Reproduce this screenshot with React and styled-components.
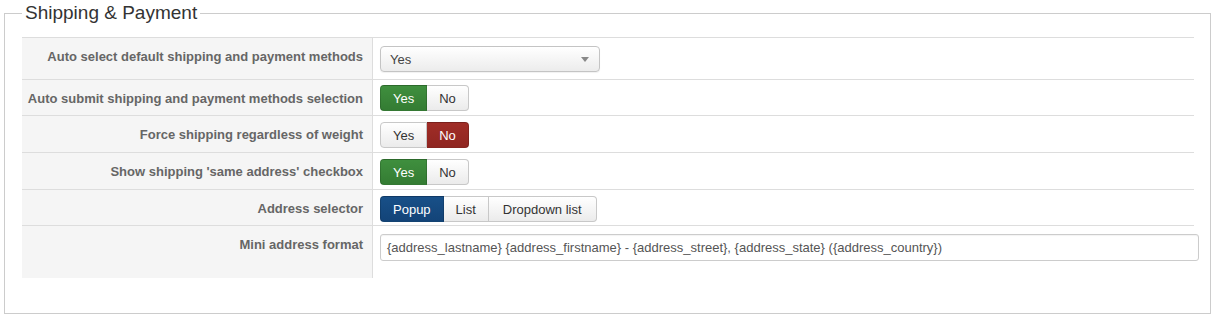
import styled, { createGlobalStyle } from "styled-components";

const GlobalStyle = createGlobalStyle`
  html, body {
    margin: 0;
    padding: 0;
    background: #fff;
    font-family: "Liberation Sans", Arial, sans-serif;
  }
`;

const Fieldset = styled.fieldset`
  margin: 0 6px 0 4px;
  padding: 11px 16px 35px 17px;
  border: 1px solid #ccc;
  min-width: 0;
`;

const Legend = styled.legend`
  padding: 0 3px;
  font-size: 19px;
  line-height: 26px;
  color: #333;
  font-weight: normal;
`;

const Table = styled.div`
  display: flex;
  flex-direction: column;
`;

const Row = styled.div`
  display: grid;
  grid-template-columns: 351px 1fr;
  box-sizing: border-box;
  border-top: 1px solid #ddd;
  height: ${(p) => p.$h}px;
`;

const Label = styled.div`
  background: #f5f5f5;
  border-right: 1px solid #ddd;
  text-align: right;
  padding: 10px 9px 0 0;
  font-size: 13px;
  line-height: 17px;
  font-weight: bold;
  color: #666;
`;

const Control = styled.div`
  padding: ${(p) => p.$top}px 0 0 7px;
  display: flex;
  align-items: flex-start;
`;

const Select = styled.div`
  width: 220px;
  height: 26px;
  box-sizing: border-box;
  border: 1px solid #c4c4c4;
  border-radius: 4px;
  background: linear-gradient(#fff, #ececec);
  box-shadow: 0 1px 1px rgba(0, 0, 0, 0.06);
  display: flex;
  align-items: center;
  justify-content: space-between;
  padding: 0 10px 0 9px;
  font-size: 13px;
  color: #444;
`;

const Caret = styled.span`
  width: 0;
  height: 0;
  border-left: 4px solid transparent;
  border-right: 4px solid transparent;
  border-top: 5px solid #888;
`;

const Group = styled.div`
  display: flex;
`;

const tones = {
  success: "linear-gradient(#3f8f3e, #347c33)",
  danger: "linear-gradient(#a02d27, #902621)",
  primary: "linear-gradient(#185088, #134478)",
};

const Btn = styled.div`
  height: 26px;
  box-sizing: border-box;
  padding: 0 ${(p) => p.$pad || 12}px;
  display: flex;
  align-items: center;
  font-size: 13px;
  color: ${(p) => (p.$tone ? "#fff" : "#333")};
  background: ${(p) => (p.$tone ? tones[p.$tone] : "linear-gradient(#fff, #ebebeb)")};
  border: 1px solid ${(p) => (p.$tone ? "rgba(0,0,0,0.15)" : "#c8c8c8")};
  border-left-width: 0;
  &:first-child {
    border-left-width: 1px;
    border-radius: 4px 0 0 4px;
  }
  &:last-child {
    border-radius: 0 4px 4px 0;
  }
`;

const Input = styled.div`
  width: 819px;
  height: 27px;
  box-sizing: border-box;
  border: 1px solid #ccc;
  border-radius: 3px;
  padding: 0 6px;
  display: flex;
  align-items: center;
  font-size: 13px;
  color: #555;
  flex-shrink: 0;
  background: #fff;
  box-shadow: inset 0 1px 1px rgba(0, 0, 0, 0.05);
`;

function Toggle({ options, active, tone }) {
  return (
    <Group>
      {options.map((o, i) => (
        <Btn key={o} $tone={i === active ? tone : null} $pad={o.length > 6 ? 14 : 12}>
          {o}
        </Btn>
      ))}
    </Group>
  );
}

export default function App() {
  return (
    <>
      <GlobalStyle />
      <Fieldset>
        <Legend>Shipping &amp; Payment</Legend>
        <Table>
          <Row $h={42}>
            <Label>Auto select default shipping and payment methods</Label>
            <Control $top={8}>
              <Select>
                <span>Yes</span>
                <Caret />
              </Select>
            </Control>
          </Row>
          <Row $h={36}>
            <Label>Auto submit shipping and payment methods selection</Label>
            <Control $top={5}>
              <Toggle options={["Yes", "No"]} active={0} tone="success" />
            </Control>
          </Row>
          <Row $h={37}>
            <Label>Force shipping regardless of weight</Label>
            <Control $top={6}>
              <Toggle options={["Yes", "No"]} active={1} tone="danger" />
            </Control>
          </Row>
          <Row $h={37}>
            <Label>Show shipping 'same address' checkbox</Label>
            <Control $top={6}>
              <Toggle options={["Yes", "No"]} active={0} tone="success" />
            </Control>
          </Row>
          <Row $h={36}>
            <Label>Address selector</Label>
            <Control $top={6}>
              <Toggle options={["Popup", "List", "Dropdown list"]} active={0} tone="primary" />
            </Control>
          </Row>
          <Row $h={53}>
            <Label>Mini address format</Label>
            <Control $top={8}>
              <Input>
                {"{address_lastname} {address_firstname} - {address_street}, {address_state} ({address_country})"}
              </Input>
            </Control>
          </Row>
        </Table>
      </Fieldset>
    </>
  );
}
